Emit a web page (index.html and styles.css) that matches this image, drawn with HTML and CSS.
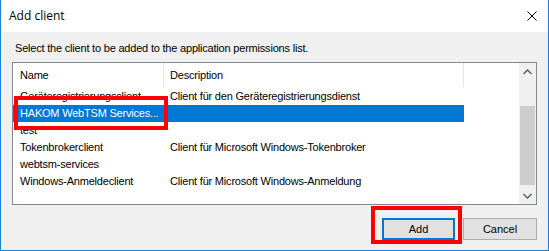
FILE: index.html
```html
<!DOCTYPE html>
<html lang="en">
<head>
  <meta charset="UTF-8">
  <meta name="viewport" content="width=device-width, initial-scale=1.0">
  <title>Add client</title>
  <link rel="stylesheet" href="styles.css">
</head>
<body>
  <div class="window">
    <div class="titlebar">
      <span class="title">Add client</span>
      <svg class="close" width="10" height="10" viewBox="0 0 10 10">
        <path d="M0.5 0.5 L9.5 9.5 M9.5 0.5 L0.5 9.5" stroke="#000" stroke-width="1" fill="none"/>
      </svg>
    </div>

    <div class="content">
      <div class="prompt">Select the client to be added to the application permissions list.</div>

      <div class="list">
        <div class="columns">
          <div class="header">
            <div class="col name">Name</div>
            <div class="col desc">Description</div>
          </div>
          <div class="row"><div class="col name">Geräteregistrierungsclient</div><div class="col desc">Client für den Geräteregistrierungsdienst</div></div>
          <div class="row selected"><div class="col name">HAKOM WebTSM Services...</div><div class="col desc"></div></div>
          <div class="row"><div class="col name">test</div><div class="col desc"></div></div>
          <div class="row"><div class="col name">Tokenbrokerclient</div><div class="col desc">Client für Microsoft Windows-Tokenbroker</div></div>
          <div class="row"><div class="col name">webtsm-services</div><div class="col desc"></div></div>
          <div class="row"><div class="col name">Windows-Anmeldeclient</div><div class="col desc">Client für Microsoft Windows-Anmeldung</div></div>
        </div>
        <div class="scrollbar">
          <div class="arrow">
            <svg width="9" height="6" viewBox="0 0 9 6"><path d="M0.5 5 L4.5 1 L8.5 5" stroke="#606060" stroke-width="1.5" fill="none"/></svg>
          </div>
          <div class="track"><div class="thumb"></div></div>
          <div class="arrow">
            <svg width="9" height="6" viewBox="0 0 9 6"><path d="M0.5 1 L4.5 5 L8.5 1" stroke="#606060" stroke-width="1.5" fill="none"/></svg>
          </div>
        </div>
      </div>

      <div class="buttons">
        <button class="btn default">Add</button>
        <button class="btn">Cancel</button>
      </div>
    </div>

    <div class="mark mark-row"></div>
    <div class="mark mark-add"></div>
  </div>
</body>
</html>
```

FILE: styles.css
```css
body {
  margin: 0;
  font-family: "Liberation Sans", Arial, sans-serif;
  font-size: 11px;
  letter-spacing: -0.2px;
  color: #000;
  background: #fff;
}
.window {
  position: relative;
  width: 549px;
  height: 251px;
  box-sizing: border-box;
  border: 1px solid #1a82d8;
  border-top: none;
  display: flex;
  flex-direction: column;
}
.titlebar {
  height: 31px;
  flex: none;
  background: #fff;
  display: flex;
  align-items: center;
  justify-content: space-between;
  padding: 0 11px 1px 8px;
}
.title {
  font-family: "Segoe UI", "Open Sans", sans-serif;
  font-size: 12px;
  letter-spacing: 0;
}
.close {
  display: block;
}
.content {
  flex: 1;
  background: #f0f0f0;
  padding: 10px 11px 0 11px;
}
.prompt {
  height: 13px;
  line-height: 13px;
  padding-left: 3px;
}
.list {
  margin-top: 7px;
  height: 143px;
  box-sizing: border-box;
  border: 1px solid #828790;
  background: #fff;
  display: flex;
}
.columns {
  flex: 1;
  overflow: hidden;
}
.header {
  height: 25px;
  display: flex;
}
.header .col {
  line-height: 25px;
  border-right: 1px solid #e5e5e5;
  height: 24px;
}
.row {
  height: 17px;
  line-height: 17px;
  display: flex;
  white-space: nowrap;
}
.col {
  box-sizing: border-box;
  overflow: hidden;
}
.col.name {
  width: 151px;
  padding-left: 7px;
}
.col.desc {
  width: 300px;
  padding-left: 6px;
}
.row.selected {
  width: 451px;
  background: #0078d7;
  color: #fff;
}
.scrollbar {
  width: 17px;
  background: #f0f0f0;
  display: flex;
  flex-direction: column;
}
.arrow {
  height: 17px;
  display: flex;
  align-items: center;
  justify-content: center;
}
.track {
  flex: 1;
  padding: 26px 1px 0 1px;
}
.thumb {
  height: 79px;
  background: #cdcdcd;
}
.buttons {
  margin-top: 13px;
  display: flex;
  justify-content: flex-end;
  gap: 8px;
}
.btn {
  font-family: "Liberation Sans", Arial, sans-serif;
  font-size: 11px;
  width: 74px;
  height: 22px;
  padding: 0;
  background: #e1e1e1;
  border: 1px solid #adadad;
  color: #000;
}
.btn.default {
  width: 73px;
  border: 2px solid #0078d7;
}
.mark {
  position: absolute;
  border: 4px solid #f00;
}
.mark-row {
  left: 13px;
  top: 96px;
  width: 146px;
  height: 26px;
}
.mark-add {
  left: 370px;
  top: 206px;
  width: 83px;
  height: 30px;
}
```
